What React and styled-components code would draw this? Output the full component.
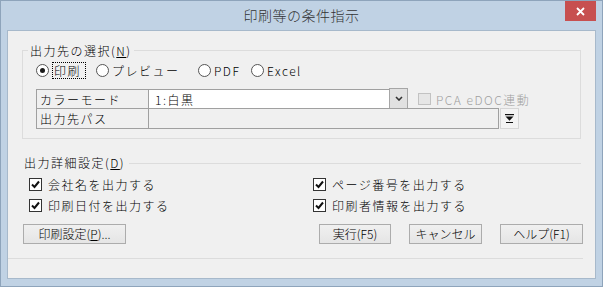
import styled, { createGlobalStyle } from "styled-components";

const GlobalStyle = createGlobalStyle`
  html, body {
    margin: 0;
    padding: 0;
    background: #ffffff;
  }
  body {
    font-family: "Noto Sans CJK JP", "Noto Sans", sans-serif;
    font-weight: 300;
    color: #000;
  }
  * {
    box-sizing: border-box;
  }
`;

const Window = styled.div`
  width: 603px;
  height: 287px;
  background: #c0d2e4;
  border: 1px solid #8ea4bb;
  display: flex;
  flex-direction: column;
`;

const TitleBar = styled.div`
  height: 29px;
  padding: 0 6px;
  display: grid;
  grid-template-columns: 1fr auto 1fr;
`;

const Title = styled.div`
  grid-column: 2;
  align-self: center;
  font-size: 14px;
  letter-spacing: 0.5px;
  color: #333;
  line-height: 29px;
`;

const CloseBtn = styled.div`
  grid-column: 3;
  justify-self: end;
  width: 31px;
  height: 20px;
  background: #c75050;
  display: flex;
  align-items: center;
  justify-content: center;
`;

const Client = styled.div`
  flex: 1;
  margin: 0 6px 7px;
  background: #f0f0f0;
  border: 1px solid #a7b9cb;
  display: flex;
  flex-direction: column;
`;

const Group = styled.fieldset`
  margin: 11px 14px 0;
  padding: 2px 0 9px 0;
  border: 1px solid #dcdcdc;
  min-width: 0;
`;

const Legend = styled.legend`
  margin-left: 5px;
  padding: 0 2px;
  font-size: 12px;
  line-height: 17px;
  letter-spacing: 1.5px;
`;

const GroupBody = styled.div`
  padding-left: 13px;
`;

const RadioRow = styled.div`
  display: flex;
  align-items: center;
  height: 18px;
`;

const RadioItem = styled.label`
  width: ${(p) => p.$w || "auto"};
  display: flex;
  align-items: center;
  gap: 3px;
  font-size: 12px;
  letter-spacing: 1.5px;
  white-space: nowrap;
`;

const RadioCircle = styled.span`
  width: 13px;
  height: 13px;
  flex: none;
  border-radius: 50%;
  border: 1px solid #555;
  background: #fff;
  display: flex;
  align-items: center;
  justify-content: center;

  &::after {
    content: "";
    width: 5px;
    height: 5px;
    border-radius: 50%;
    background: ${(p) => (p.$on ? "#1a1a1a" : "transparent")};
  }
`;

const Focus = styled.span`
  border: 1px dotted #000;
  padding: 0 4px 0 1px;
  line-height: 15px;
`;

const Table = styled.div`
  margin-top: 10px;
  display: grid;
  grid-template-columns: 113px 259px 91px 20px;
  grid-template-rows: 20px 20px;
  font-size: 12px;
  letter-spacing: 1.5px;
`;

const LabelCell = styled.div`
  grid-column: 1;
  grid-row: ${(p) => p.$row};
  margin-top: ${(p) => (p.$row === 2 ? "-1px" : "0")};
  border: 1px solid #a0a0a0;
  padding-left: 3px;
  display: flex;
  align-items: center;
`;

const SelectBox = styled.div`
  grid-column: 2;
  grid-row: 1;
  margin-left: -1px;
  border: 1px solid #a0a0a0;
  background: #fff;
  display: flex;
  align-items: center;
  padding-left: 6px;
`;

const SelectText = styled.span`
  flex: 1;
`;

const DropBtn = styled.span`
  width: 19px;
  align-self: stretch;
  margin: -2px -1px -1px 0;
  border: 1px solid #a6a6a6;
  background: #e1e1e1;
  display: flex;
  align-items: center;
  justify-content: center;
`;

const LinkCell = styled.div`
  grid-column: 3 / 5;
  grid-row: 1;
  padding-left: 10px;
  display: flex;
  align-items: center;
  gap: 5px;
  color: #a0a0a0;
  white-space: nowrap;
`;

const DisabledBox = styled.span`
  width: 13px;
  height: 12px;
  flex: none;
  border: 1px solid #c2c2c2;
  background: #e6e6e6;
`;

const PathInput = styled.div`
  grid-column: 2 / 4;
  grid-row: 2;
  margin: -1px 0 0 -1px;
  border: 1px solid #a0a0a0;
  background: #f0f0f0;
`;

const PathBtn = styled.div`
  grid-column: 4;
  grid-row: 2;
  margin: -1px 0 0 1px;
  border: 1px solid #d6d6d6;
  background: #f3f3f3;
  display: flex;
  align-items: center;
  justify-content: center;
`;

const SectionHead = styled.div`
  margin: 15px 14px 0 16px;
  height: 17px;
  display: flex;
  align-items: center;
  gap: 4px;
  font-size: 12px;
  letter-spacing: 1.5px;
  white-space: nowrap;

  &::after {
    content: "";
    flex: 1;
    border-top: 1px solid #dcdcdc;
    margin-top: 2px;
  }
`;

const CheckGrid = styled.div`
  margin: 3px 0 0 21px;
  display: grid;
  grid-template-columns: 284px 1fr;
  grid-auto-rows: 21px;
`;

const CheckItem = styled.label`
  display: flex;
  align-items: center;
  gap: 6px;
  font-size: 12px;
  letter-spacing: 1.5px;
  white-space: nowrap;
`;

const CheckBox = styled.span`
  width: 13px;
  height: 13px;
  flex: none;
  border: 1px solid #333;
  background: #fff;
  display: flex;
  align-items: center;
  justify-content: center;
`;

const ButtonRow = styled.div`
  margin: 8px 12px 0 15px;
  height: 20px;
  display: flex;
`;

const ButtonGroup = styled.div`
  margin-left: auto;
  display: flex;
  gap: 18px;
`;

const Button = styled.button`
  width: ${(p) => p.$w}px;
  height: 20px;
  padding: 0;
  border: 1px solid #acacac;
  background: linear-gradient(#f0f0f0, #e5e5e5);
  font-family: "Noto Sans CJK JP", "Noto Sans", sans-serif;
  font-weight: 300;
  font-size: 12px;
  line-height: 18px;
  color: #000;
`;

const Separator = styled.div`
  margin: 14px 12px 0 0;
  border-top: 1px solid #dcdcdc;
`;

const Check = () => (
  <svg width="9" height="9" viewBox="0 0 9 9">
    <path d="M1 4.5 L3.5 7 L8 1.5" fill="none" stroke="#111" strokeWidth="2" />
  </svg>
);

const Chevron = () => (
  <svg width="8" height="5" viewBox="0 0 8 5">
    <path d="M1 1 L4 4 L7 1" fill="none" stroke="#333" strokeWidth="1.6" />
  </svg>
);

const BarArrow = () => (
  <svg width="9" height="9" viewBox="0 0 9 9">
    <rect x="0" y="0" width="9" height="1.2" fill="#111" />
    <path d="M0.5 2.5 H8.5 L4.5 6.8 Z" fill="#111" />
    <rect x="1" y="8" width="7" height="1" fill="#111" />
  </svg>
);

const CloseX = () => (
  <svg width="9" height="9" viewBox="0 0 9 9">
    <path d="M1 1 L8 8 M8 1 L1 8" stroke="#fff" strokeWidth="1.8" />
  </svg>
);

const App = () => {
  return (
    <>
      <GlobalStyle />
      <Window>
        <TitleBar>
          <Title>印刷等の条件指示</Title>
          <CloseBtn>
            <CloseX />
          </CloseBtn>
        </TitleBar>
        <Client>
          <Group>
            <Legend>
              出力先の選択(<u>N</u>)
            </Legend>
            <GroupBody>
              <RadioRow>
                <RadioItem $w="60px">
                  <RadioCircle $on />
                  <Focus>印刷</Focus>
                </RadioItem>
                <RadioItem $w="102px">
                  <RadioCircle />
                  プレビュー
                </RadioItem>
                <RadioItem $w="53px">
                  <RadioCircle />
                  PDF
                </RadioItem>
                <RadioItem>
                  <RadioCircle />
                  Excel
                </RadioItem>
              </RadioRow>
              <Table>
                <LabelCell $row={1}>カラーモード</LabelCell>
                <SelectBox>
                  <SelectText>1:白黒</SelectText>
                  <DropBtn>
                    <Chevron />
                  </DropBtn>
                </SelectBox>
                <LinkCell>
                  <DisabledBox />
                  PCA eDOC連動
                </LinkCell>
                <LabelCell $row={2}>出力先パス</LabelCell>
                <PathInput />
                <PathBtn>
                  <BarArrow />
                </PathBtn>
              </Table>
            </GroupBody>
          </Group>

          <SectionHead>
            <span>
              出力詳細設定(<u>D</u>)
            </span>
          </SectionHead>
          <CheckGrid>
            <CheckItem>
              <CheckBox>
                <Check />
              </CheckBox>
              会社名を出力する
            </CheckItem>
            <CheckItem>
              <CheckBox>
                <Check />
              </CheckBox>
              ページ番号を出力する
            </CheckItem>
            <CheckItem>
              <CheckBox>
                <Check />
              </CheckBox>
              印刷日付を出力する
            </CheckItem>
            <CheckItem>
              <CheckBox>
                <Check />
              </CheckBox>
              印刷者情報を出力する
            </CheckItem>
          </CheckGrid>

          <ButtonRow>
            <Button $w={103}>
              印刷設定(<u>P</u>)...
            </Button>
            <ButtonGroup>
              <Button $w={72}>実行(F5)</Button>
              <Button $w={73}>キャンセル</Button>
              <Button $w={83}>ヘルプ(F1)</Button>
            </ButtonGroup>
          </ButtonRow>
          <Separator />
        </Client>
      </Window>
    </>
  );
};

export default App;
